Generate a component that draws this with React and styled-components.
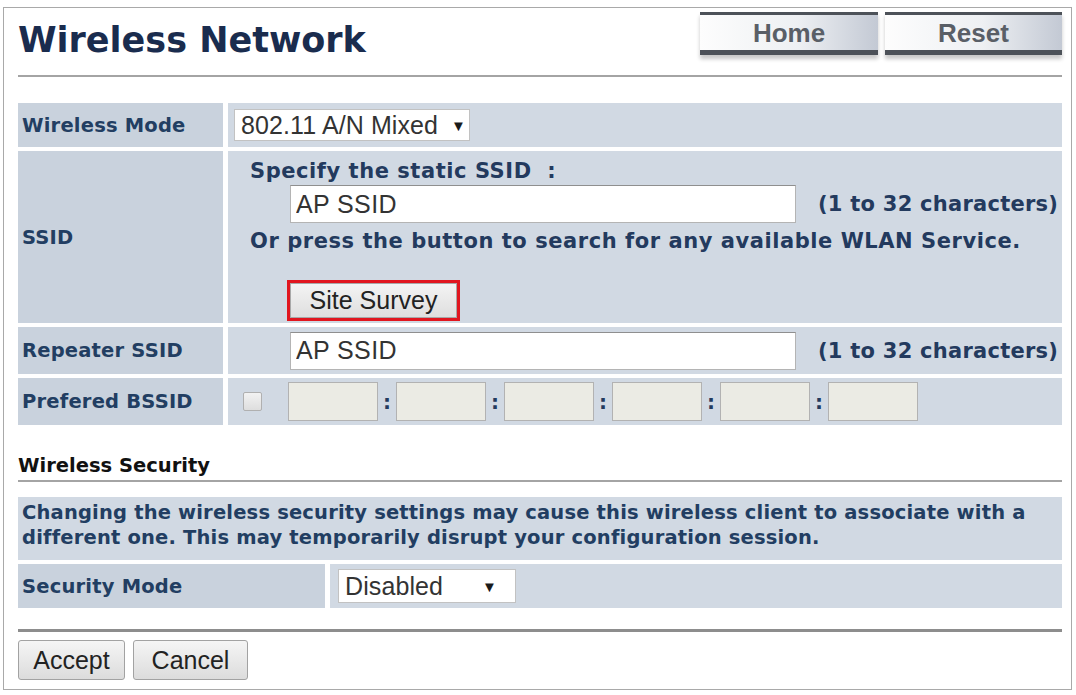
import styled, { createGlobalStyle } from 'styled-components';

const GlobalStyle = createGlobalStyle`
  html, body {
    margin: 0;
    padding: 0;
    background: #fff;
  }
  body {
    font-family: 'Liberation Sans', Arial, sans-serif;
  }
`;

const Frame = styled.div`
  box-sizing: border-box;
  width: 1069px;
  height: 683px;
  margin: 7px 0 0 3px;
  border: 1px solid #a9a9a9;
  padding: 4px 9px 0 14px;
  background: #fff;
`;

const Header = styled.div`
  display: flex;
  justify-content: space-between;
  align-items: flex-start;
  height: 48px;
`;

const Title = styled.h1`
  margin: 8px 0 0;
  font-family: 'DejaVu Sans', Verdana, sans-serif;
  font-size: 35px;
  line-height: 40px;
  font-weight: bold;
  color: #1a2c4e;
`;

const NavGroup = styled.div`
  display: flex;
  gap: 7px;
`;

const NavButton = styled.button`
  box-sizing: border-box;
  width: ${(p) => p.$w}px;
  height: 43px;
  padding: 1px 0 0;
  border: 0;
  border-top: 3px solid #4d5259;
  border-bottom: 5px solid #4d5259;
  background: linear-gradient(90deg, #fdfdfd 0%, #eef0f3 55%, #c3c9d4 100%);
  box-shadow: 0 4px 4px rgba(0, 0, 0, 0.22);
  font-family: 'Liberation Sans', Arial, sans-serif;
  font-weight: bold;
  font-size: 26px;
  color: #5a5f67;
  cursor: pointer;
`;

const Divider = styled.hr`
  margin: ${(p) => p.$top}px 0 0;
  border: 0;
  height: ${(p) => p.$size}px;
  background: ${(p) => p.$color || '#a4a4a4'};
`;

const Table = styled.div`
  display: flex;
  flex-direction: column;
  gap: 4px;
  margin-top: ${(p) => p.$top}px;
`;

const Row = styled.div`
  display: grid;
  grid-template-columns: ${(p) => p.$label}px 1fr;
  column-gap: 5px;
  height: ${(p) => p.$h}px;
`;

const Label = styled.div`
  display: flex;
  align-items: center;
  padding-left: 4px;
  background: #c9d2dd;
  font-family: 'DejaVu Sans', Verdana, sans-serif;
  font-weight: bold;
  font-size: 19.5px;
  letter-spacing: 0.2px;
  color: #223e62;
  white-space: nowrap;
`;

const Value = styled.div`
  display: flex;
  align-items: center;
  padding-left: ${(p) => p.$pad || 0}px;
  background: #d1d9e3;
  font-family: 'DejaVu Sans', Verdana, sans-serif;
  font-weight: bold;
  font-size: 21px;
  color: #233a5e;
`;

const SsidValue = styled(Value)`
  flex-direction: column;
  align-items: flex-start;
  padding: 8px 0 0 22px;
`;

const Line = styled.div`
  line-height: 24px;
  letter-spacing: 0.55px;
  margin-top: ${(p) => p.$top || 0}px;
  white-space: nowrap;
`;

const InputRow = styled.div`
  display: flex;
  align-items: center;
  gap: 22px;
  margin: ${(p) => p.$top || 0}px 0 0 ${(p) => p.$left || 0}px;
`;

const TextInput = styled.input`
  box-sizing: border-box;
  width: 506px;
  height: 38px;
  padding: 0 5px;
  border: 1px solid #b4b4b4;
  border-top-color: #8f8f8f;
  background: #fff;
  font-family: 'Liberation Sans', Arial, sans-serif;
  font-size: 25px;
  letter-spacing: 0.4px;
  color: #333;
  outline: none;
`;

const Hint = styled.span`
  letter-spacing: 0.25px;
  white-space: nowrap;
`;

const SelectBox = styled.div`
  box-sizing: border-box;
  display: flex;
  align-items: center;
  justify-content: space-between;
  width: ${(p) => p.$w}px;
  height: ${(p) => p.$h}px;
  padding: 0 ${(p) => p.$right}px 0 6px;
  background: #fff;
  border: 1px solid #c2c2c2;
  font-family: 'Liberation Sans', Arial, sans-serif;
  font-weight: normal;
  font-size: 25px;
  letter-spacing: 0.1px;
  color: #333;
`;

const Arrow = styled.span`
  font-size: 15px;
  color: #1a1a1a;
`;

const SurveyButton = styled.button`
  box-sizing: border-box;
  width: 173px;
  height: 41px;
  margin: 27px 0 0 37px;
  border: 3px solid #e1161f;
  box-shadow: inset 0 0 0 1px #a8a8a8;
  background: linear-gradient(#f4f4f4, #dedede);
  font-family: 'Liberation Sans', Arial, sans-serif;
  font-size: 25px;
  color: #222;
  padding: 0;
`;

const CheckBox = styled.span`
  box-sizing: border-box;
  width: 19px;
  height: 19px;
  margin-right: 26px;
  border: 1px solid #b0b0b0;
  border-radius: 2px;
  background: linear-gradient(#f2f2f2, #dedede);
`;

const Octet = styled.input`
  box-sizing: border-box;
  width: 90px;
  height: 39px;
  border: 1px solid #b2b2b2;
  background: #ebebe4;
  outline: none;
`;

const Colon = styled.span`
  width: 18px;
  text-align: center;
  font-size: 20px;
`;

const SectionTitle = styled.div`
  margin-top: 29px;
  line-height: 24px;
  font-family: 'DejaVu Sans', Verdana, sans-serif;
  font-weight: bold;
  font-size: 19.5px;
  color: #111;
`;

const Notice = styled.div`
  height: 63px;
  box-sizing: border-box;
  padding: 3px 4px 0;
  background: #d1d9e3;
  font-family: 'DejaVu Sans', Verdana, sans-serif;
  font-weight: bold;
  font-size: 19.5px;
  letter-spacing: 0.18px;
  line-height: 25px;
  color: #223e62;
`;

const Actions = styled.div`
  display: flex;
  gap: 8px;
  margin-top: 8px;
`;

const ActionButton = styled.button`
  box-sizing: border-box;
  width: ${(p) => p.$w}px;
  height: 40px;
  padding: 0;
  border: 1px solid #a2a2a2;
  border-radius: 3px;
  background: linear-gradient(#f5f5f5, #dcdcdc);
  font-family: 'Liberation Sans', Arial, sans-serif;
  font-size: 25px;
  color: #222;
`;

const octets = [0, 1, 2, 3, 4, 5];

const App = () => {
  return (
    <>
      <GlobalStyle />
      <Frame>
        <Header>
          <Title>Wireless Network</Title>
          <NavGroup>
            <NavButton $w={178}>Home</NavButton>
            <NavButton $w={177}>Reset</NavButton>
          </NavGroup>
        </Header>
        <Divider $top={15} $size={2} />

        <Table $top={26}>
          <Row $label={205} $h={44}>
            <Label>Wireless Mode</Label>
            <Value $pad={6}>
              <SelectBox $w={236} $h={32} $right={3}>
                <span>802.11 A/N Mixed</span>
                <Arrow>▼</Arrow>
              </SelectBox>
            </Value>
          </Row>
          <Row $label={205} $h={172}>
            <Label>SSID</Label>
            <SsidValue>
              <Line>Specify the static SSID&nbsp; :</Line>
              <InputRow $top={2} $left={40}>
                <TextInput defaultValue="AP SSID" />
                <Hint>(1 to 32 characters)</Hint>
              </InputRow>
              <Line $top={6}>
                Or press the button to search for any available WLAN Service.
              </Line>
              <SurveyButton>Site Survey</SurveyButton>
            </SsidValue>
          </Row>
          <Row $label={205} $h={47}>
            <Label>Repeater SSID</Label>
            <Value>
              <InputRow $left={62}>
                <TextInput defaultValue="AP SSID" />
                <Hint>(1 to 32 characters)</Hint>
              </InputRow>
            </Value>
          </Row>
          <Row $label={205} $h={47}>
            <Label>Prefered BSSID</Label>
            <Value $pad={15}>
              <CheckBox />
              {octets.map((i) => (
                <span key={i} style={{ display: 'contents' }}>
                  {i > 0 && <Colon>:</Colon>}
                  <Octet disabled />
                </span>
              ))}
            </Value>
          </Row>
        </Table>

        <SectionTitle>Wireless Security</SectionTitle>
        <Divider $top={2} $size={2} />

        <Table $top={15}>
          <Notice>
            Changing the wireless security settings may cause this wireless
            client to associate with a<br />
            different one. This may temporarily disrupt your configuration
            session.
          </Notice>
          <Row $label={307} $h={44}>
            <Label>Security Mode</Label>
            <Value $pad={8}>
              <SelectBox $w={178} $h={34} $right={18}>
                <span>Disabled</span>
                <Arrow>▼</Arrow>
              </SelectBox>
            </Value>
          </Row>
        </Table>

        <Divider $top={21} $size={3} $color="#8d8d8d" />
        <Actions>
          <ActionButton $w={107}>Accept</ActionButton>
          <ActionButton $w={115}>Cancel</ActionButton>
        </Actions>
      </Frame>
    </>
  );
};

export default App;
